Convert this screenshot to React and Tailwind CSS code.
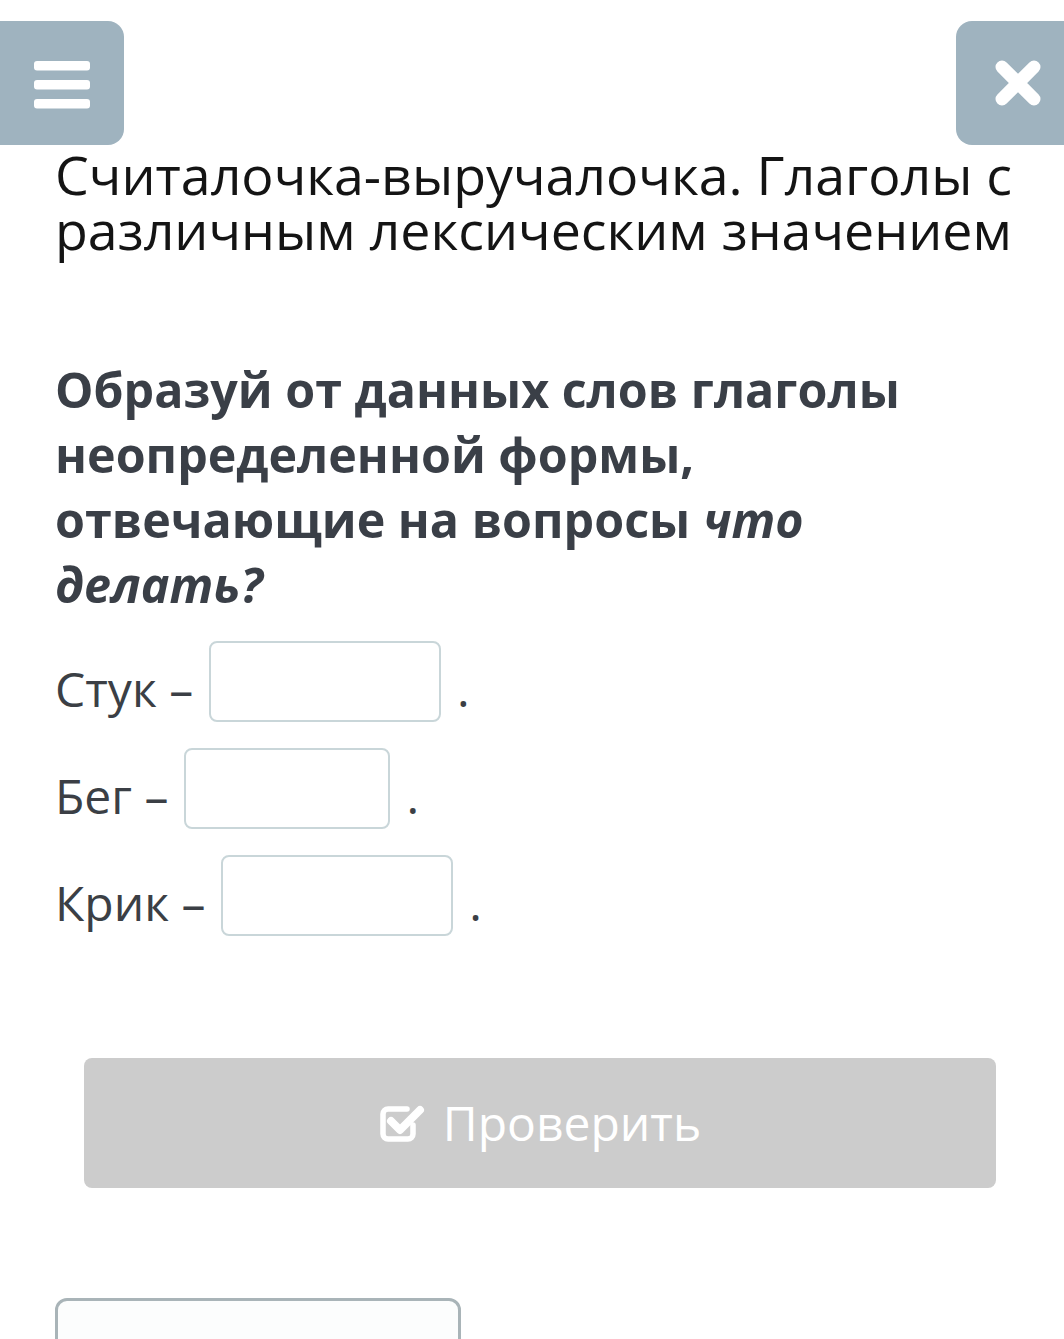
import React from "react";

const font = { fontFamily: '"Open Sans", "Noto Sans", sans-serif' };

function Row({ label, width }) {
  return (
    <div className="flex items-end h-[81px]">
      <span className="text-[48px] leading-[48px] text-[#3b3f45] mb-[9px] whitespace-pre">{label + " "}</span>
      <div className="ml-[3px] h-[81px] rounded-[8px] border-2 border-[#c9d6d9] bg-white" style={{ width }} />
      <span className="ml-[4px] text-[48px] leading-[48px] text-[#3b3f45] mb-[9px] whitespace-pre">{" ."}</span>
    </div>
  );
}

export default function App() {
  return (
    <div className="w-[1064px] h-[1339px] overflow-hidden bg-white relative" style={font}>
      <div className="flex justify-between h-[145px]">
        <div className="mt-[21px] w-[124px] h-[124px] rounded-r-[16px] bg-[#9fb3bf] flex items-center justify-center">
          <svg width="60" height="52" viewBox="0 0 60 52">
            <rect x="2" y="4" width="56" height="9.5" rx="3" fill="white" />
            <rect x="2" y="23" width="56" height="9.5" rx="3" fill="white" />
            <rect x="2" y="42" width="56" height="9.5" rx="3" fill="white" />
          </svg>
        </div>
        <div className="mt-[21px] w-[124px] h-[124px] mr-[-16px] rounded-l-[16px] bg-[#9fb3bf] flex items-center justify-start pl-[38px]">
          <svg width="48" height="48" viewBox="0 0 48 48">
            <path d="M8 8 L40 40 M40 8 L8 40" stroke="white" strokeWidth="13" strokeLinecap="round" />
          </svg>
        </div>
      </div>
      <div className="pl-[55px] pr-[20px]">
        <h1 className="mt-[2px] text-[53.7px] leading-[55px] text-[#141414] font-normal">
          Считалочка-выручалочка. Глаголы с различным лексическим значением
        </h1>
        <p className="mt-[100px] text-[48.4px] leading-[65px] font-bold text-[#3a3f47] pr-[80px]">
          Образуй от данных слов глаголы неопределенной формы, отвечающие на вопросы <i>что делать?</i>
        </p>
        <div className="mt-[24px] flex flex-col gap-[26px]">
          <Row label="Стук –" width={232} />
          <Row label="Бег –" width={206} />
          <Row label="Крик –" width={232} />
        </div>
      </div>
      <div className="mt-[122px] ml-[84px] w-[912px] h-[130px] rounded-[8px] bg-[#cccccc] flex items-center justify-center gap-[16px]">
        <svg width="48" height="44" viewBox="0 0 48 44">
          <path d="M34 24 V33 a5 5 0 0 1 -5 5 H9 a5 5 0 0 1 -5 -5 V13 a5 5 0 0 1 5 -5 H28" fill="none" stroke="white" strokeWidth="5.5" strokeLinecap="round" />
          <path d="M12 20 L21 29 L41 9" fill="none" stroke="white" strokeWidth="8" strokeLinecap="round" strokeLinejoin="round" />
        </svg>
        <span className="text-[48px] leading-[52px] text-white">Проверить</span>
      </div>
      <div className="mt-[110px] ml-[55px] w-[406px] h-[100px] rounded-[12px] border-[3px] border-[#a9b4b8] bg-[#fcfdfd]" />
    </div>
  );
}
